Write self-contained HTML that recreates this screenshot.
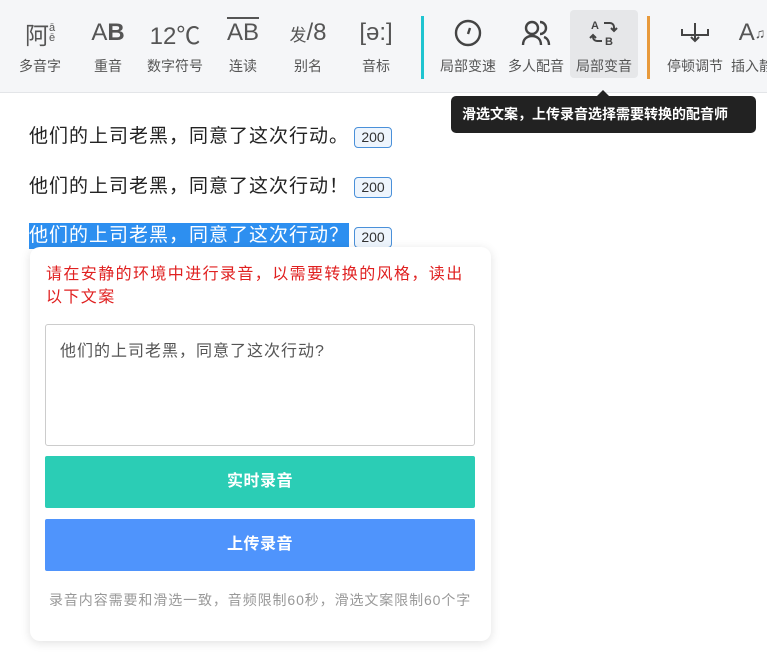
<!DOCTYPE html>
<html><head><meta charset="utf-8"><style>
*{box-sizing:border-box;margin:0;padding:0}
body{width:767px;height:654px;overflow:hidden;background:#fff;font-family:"Liberation Sans","Noto Sans CJK SC",sans-serif;position:relative}
.tb{position:absolute;left:0;top:0;width:767px;height:93px;background:#f5f6f8;border-bottom:1px solid #e3e5e8}
.it{position:absolute;top:10px;height:68px;width:68px;margin-left:-34px;text-align:center;color:#555}
.it .ic{height:40px;display:flex;align-items:center;justify-content:center;font-size:24px;color:#555;padding-top:6px}
.it .lb{font-size:14px;color:#555;margin-top:6px;white-space:nowrap}
.sel{background:#e6e7e9;border-radius:4px}
.bar{position:absolute;top:16px;width:3px;height:63px}
.tip{position:absolute;left:451px;top:96px;width:305px;height:37px;background:#222;border-radius:5px;color:#fff;font-size:14px;font-weight:bold;line-height:37px;padding-left:11px;white-space:nowrap}
.tip:before{content:"";position:absolute;left:146px;top:-6px;border:6px solid transparent;border-top:0;border-bottom-color:#222}
.ln{position:absolute;left:29px;font-size:19px;letter-spacing:1px;color:#222;height:26px;line-height:26px}
.tag{position:absolute;left:354px;width:38px;height:21px;border:1px solid #4a90d9;background:#eef5fd;border-radius:4px;font-size:14px;color:#333;text-align:center;line-height:19px}
.card{position:absolute;left:30px;top:247px;width:461px;height:394px;background:#fff;border-radius:10px;box-shadow:0 2px 10px rgba(0,0,0,.12)}
.red{position:absolute;left:16px;top:16px;width:430px;color:#e02020;font-size:16px;letter-spacing:1.4px;line-height:23px}
.ta{position:absolute;left:15px;top:77px;width:430px;height:122px;border:1px solid #ccc;border-radius:3px;padding:12px 14px;font-size:16px;letter-spacing:1px;color:#555}
.btn{position:absolute;left:15px;width:430px;height:52px;color:#fff;font-size:16px;font-weight:bold;letter-spacing:.5px;text-align:center;line-height:52px;border-radius:2px}
.ft{position:absolute;left:19px;top:343px;font-size:14px;letter-spacing:.9px;color:#999;white-space:nowrap}
</style></head><body>
<div class="tb">
<div class="it" style="left:40px"><div class="ic">阿<span style="font-size:11px;line-height:10px;display:inline-block">ā<br>ē</span></div><div class="lb">多音字</div></div>
<div class="it" style="left:108px"><div class="ic">A<b style="font-weight:600">B</b></div><div class="lb">重音</div></div>
<div class="it" style="left:175px"><div class="ic">12℃</div><div class="lb">数字符号</div></div>
<div class="it" style="left:243px"><div class="ic" style="text-decoration:overline">AB</div><div class="lb">连读</div></div>
<div class="it" style="left:308px"><div class="ic"><span style="font-size:17px">发</span>/8</div><div class="lb">别名</div></div>
<div class="it" style="left:376px"><div class="ic">[ə:]</div><div class="lb">音标</div></div>
<div class="bar" style="left:421px;background:#1fc4d0"></div>
<div class="it" style="left:468px"><div class="ic"><svg width="28" height="28" viewBox="0 0 28 28" fill="none" stroke="#444" stroke-width="2.4"><circle cx="14" cy="14" r="12"/><path d="M14 15l2-6"/></svg></div><div class="lb">局部变速</div></div>
<div class="it" style="left:536px"><div class="ic"><svg width="30" height="28" viewBox="0 0 30 28" fill="none" stroke="#444" stroke-width="2.4"><circle cx="11" cy="9" r="6"/><path d="M2 26c0-6 4-9 9-9s9 3 9 9M19 3a6 6 0 0 1 0 12M23 18c3 1 5 4 5 8"/></svg></div><div class="lb">多人配音</div></div>
<div class="it sel" style="left:604px"><div class="ic"><svg width="32" height="32" viewBox="0 0 32 32" fill="none" stroke="#444" stroke-width="2"><text x="3" y="12" font-size="11" font-weight="bold" fill="#444" stroke="none" font-family="Liberation Sans">A</text><text x="17" y="28" font-size="11" font-weight="bold" fill="#444" stroke="none" font-family="Liberation Sans">B</text><path d="M16 6h6a4 4 0 0 1 4 4v4M23 11l3 3 3-3M14 24H9a4 4 0 0 1-4-4v-2M2 21l3-3 3 3"/></svg></div><div class="lb">局部变音</div></div>
<div class="bar" style="left:647px;background:#e89a3c"></div>
<div class="it" style="left:695px"><div class="ic"><svg width="30" height="24" viewBox="0 0 30 24" fill="none" stroke="#444" stroke-width="2"><path d="M2 8v6h26V8M15 2v18M11 16l4 4 4-4"/></svg></div><div class="lb">停顿调节</div></div>
<div class="it" style="left:752px"><div class="ic">A<span style="font-size:14px">♫</span></div><div class="lb">插入静</div></div>
</div>
<div class="tip">滑选文案，上传录音选择需要转换的配音师</div>
<div class="ln" style="top:124px">他们的上司老黑，同意了这次行动。</div>
<div class="tag" style="top:127px">200</div>
<div class="ln" style="top:174px">他们的上司老黑，同意了这次行动！</div>
<div class="tag" style="top:177px">200</div>
<div class="ln" style="top:223px;background:#2d8ff0;color:#fff;width:320px;overflow:hidden;white-space:nowrap">他们的上司老黑，同意了这次行动？</div>
<div class="tag" style="top:227px">200</div>
<div class="card">
<div class="red">请在安静的环境中进行录音，以需要转换的风格，读出以下文案</div>
<div class="ta">他们的上司老黑，同意了这次行动?</div>
<div class="btn" style="top:209px;background:#2bcdb5">实时录音</div>
<div class="btn" style="top:272px;background:#4f94fc">上传录音</div>
<div class="ft">录音内容需要和滑选一致，音频限制60秒，滑选文案限制60个字</div>
</div>
</body></html>
